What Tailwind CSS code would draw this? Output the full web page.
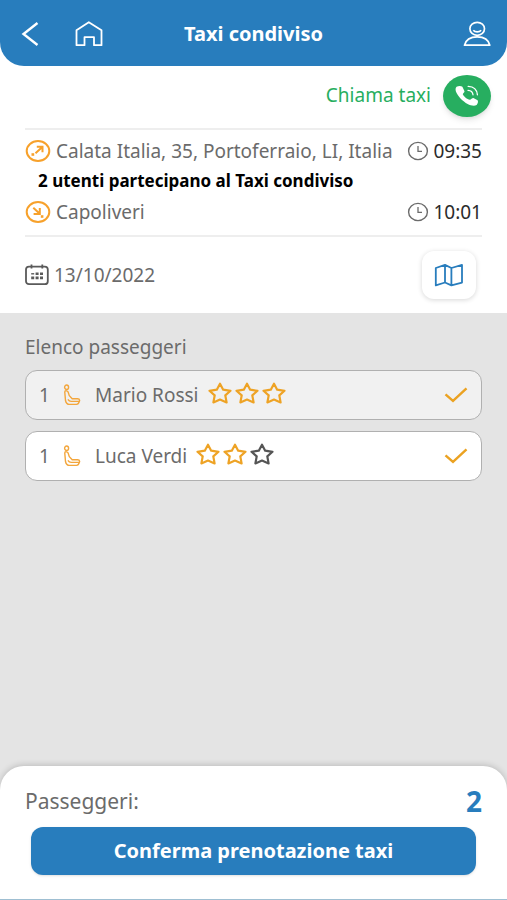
<!DOCTYPE html>
<html lang="it">
<head>
<meta charset="utf-8">
<meta name="viewport" content="width=device-width, initial-scale=1">
<title>Taxi condiviso</title>
<script src="https://cdn.jsdelivr.net/npm/@tailwindcss/browser@4"></script>
</head>
<body class="flex min-h-screen flex-col bg-white font-['Noto_Sans','Open_Sans',sans-serif] text-[19px] leading-6 text-[#6b6b6b]">
<svg class="hidden" aria-hidden="true">
  <symbol id="star" viewBox="0 0 24 22"><path d="M12 1.7 15.2 7.7 22.5 8.8 17.3 13.4 18.6 20.4 12 17.6 5.4 20.4 6.7 13.4 1.5 8.8 8.8 7.7Z" fill="none" stroke="currentColor" stroke-width="2.2" stroke-linejoin="round"/></symbol>
  <symbol id="clock" viewBox="0 0 22 20"><g fill="none" stroke="currentColor"><ellipse cx="11" cy="10" rx="9.4" ry="8.6" stroke-width="1.4"/><path d="M11 5V10.3H15" stroke-width="1.3"/></g></symbol>
  <symbol id="seat" viewBox="0 0 18 22"><g fill="none" stroke="currentColor" stroke-width="1.4" stroke-linejoin="round"><ellipse cx="3.6" cy="3.2" rx="2" ry="2.2"/><path d="M1.7 7.3C2.8 6.4 4.6 6.8 5.1 8L6.3 11.6 9.2 14.8H14.6C17.2 14.8 17.2 17.6 15.2 17.6"/><path d="M1.7 7.3 2.5 16.5C3 19 4.3 20.4 6.5 20.4H13.5C15 20.4 15.8 19.4 16.3 17.4H8.2C6.6 17.4 5.6 16.6 4.9 15.4"/></g></symbol>
  <symbol id="check" viewBox="0 0 24 18"><path d="M1.5 8.4 9 15 22.5 2.4" fill="none" stroke="currentColor" stroke-width="2.4"/></symbol>
</svg>

<header class="grid h-[66px] grid-cols-[1fr_auto_1fr] items-center rounded-b-3xl bg-[#287dbd] px-4 pt-0.5 text-white">
  <div class="flex items-center gap-[27px]">
    <button type="button" aria-label="Indietro" class="px-1">
      <svg class="h-7 w-6" viewBox="0 0 24 28"><path d="M17.5 3 3.5 14 17.5 25" fill="none" stroke="currentColor" stroke-width="2.4"/></svg>
    </button>
    <a href="#" aria-label="Home">
      <svg class="h-7 w-7" viewBox="0 0 28 28"><path d="M1.5 25.2V10.2L13.8 2.2 26.5 10.2V25.2H19V17.2H9.5V25.2Z" fill="none" stroke="currentColor" stroke-width="1.8" stroke-linejoin="round"/></svg>
    </a>
  </div>
  <h1 class="text-xl leading-6 font-bold">Taxi condiviso</h1>
  <a href="#" aria-label="Profilo" class="justify-self-end">
    <svg class="h-7 w-7" viewBox="0 0 28 28" fill="none" stroke="currentColor" stroke-width="1.7"><ellipse cx="14.2" cy="8.8" rx="7.3" ry="6.5"/><path d="M10.3 10.2C12 12.4 16.4 12.4 18.1 10.2"/><path d="M1.5 25.2C2.8 19.8 7.5 16.8 14.2 16.8S25.6 19.8 26.8 25.2Z" stroke-linejoin="round"/></svg>
  </a>
</header>

<main class="flex flex-1 flex-col">
  <section class="px-[25px]">
    <div class="-mr-[9px] flex h-[62px] items-center justify-end gap-3 pb-0.5">
      <label for="call" class="pb-0.5 text-[#27ae60]">Chiama taxi</label>
      <button id="call" type="button" class="flex h-[42px] w-12 items-center justify-center rounded-[50%] bg-[#27ae60] text-white shadow-md">
        <svg class="h-6 w-6" viewBox="0 0 24 24"><path d="M1.6 2.8C3.2 1.7 6.2 1.6 7.4 2.8L9.5 7.2C9.8 8.3 7.9 9.4 7.8 10.2C8.6 12.4 12.2 15.2 14.8 15.8C16 15.7 17.2 14 18.4 14.1L22.6 16.2C23.4 17 22.9 19.6 21.6 21C19.2 22.4 15.4 21.4 12.6 20C7.8 17.4 3 12.6 1 7.8C.4 6 .3 3.8 1.6 2.8Z" fill="currentColor"/><path d="M13 6.3C15.9 6.4 17.7 8 18 10.8M13.2 2.4C18.6 2.6 21.9 5.6 22.4 10.8" fill="none" stroke="currentColor" stroke-width="1.3" stroke-linecap="round"/></svg>
      </button>
    </div>
    <div class="border-y-2 border-[#eeeeee] pt-[9px] pb-[11px]">
      <div class="flex items-center justify-between">
        <div class="flex items-center gap-[5px]">
          <svg class="h-6 w-[26px] shrink-0 text-[#f7a12b]" viewBox="0 0 26 24" fill="none" stroke="currentColor"><ellipse cx="13" cy="12" rx="11.3" ry="10" stroke-width="2"/><path d="M10.5 14.2 17 8.3M11.8 7.8H17.5V13.2" stroke-width="2"/><path d="M6.5 15.5H9.2" stroke-width="2.6"/></svg>
          <span>Calata Italia, 35, Portoferraio, LI, Italia</span>
        </div>
        <div class="flex shrink-0 items-center gap-1">
          <svg class="h-5 w-[22px]"><use href="#clock"/></svg>
          <time class="text-[#2b2b2b]">09:35</time>
        </div>
      </div>
      <p class="pt-2 pb-[9px] pl-[13px] text-[17px] leading-5 font-bold text-black">2 utenti partecipano al Taxi condiviso</p>
      <div class="flex items-center justify-between">
        <div class="flex items-center gap-[5px]">
          <svg class="h-6 w-[26px] shrink-0 text-[#f7a12b]" viewBox="0 0 26 24" fill="none" stroke="currentColor"><ellipse cx="13" cy="12" rx="11.3" ry="10" stroke-width="2"/><path d="M8.3 7.8 14.2 13.2M14.8 8V14H8.6" stroke-width="2"/><path d="M15.8 16.5H18.4" stroke-width="2.6"/></svg>
          <span>Capoliveri</span>
        </div>
        <div class="flex shrink-0 items-center gap-1">
          <svg class="h-5 w-[22px]"><use href="#clock"/></svg>
          <time class="text-[#2b2b2b]">10:01</time>
        </div>
      </div>
    </div>
    <div class="flex h-[76px] items-center justify-between pr-1.5">
      <div class="flex items-center gap-[5px]">
        <svg class="h-6 w-6" viewBox="0 0 24 24" fill="none" stroke="#5a5a5a"><rect x="1" y="3.6" width="21.8" height="17.6" rx="3" stroke-width="1.8"/><path d="M6.5 1.5V5.5M17.3 1.5V5.5" stroke-width="1.8"/><path d="M10.6 10.8H18.2" stroke-width="2.4" stroke-dasharray="3 1.4"/><path d="M6.2 10.8H9.2" stroke-width="1.4"/><path d="M6.2 14.8H18.2" stroke-width="2.8" stroke-dasharray="3 1.4"/></svg>
        <time>13/10/2022</time>
      </div>
      <button type="button" aria-label="Mappa" class="flex h-12 w-[54px] items-center justify-center rounded-xl bg-white text-[#287dbd] shadow-[0_1px_5px_rgba(0,0,0,0.16)]">
        <svg class="h-6 w-[30px]" viewBox="0 0 30 24" fill="none" stroke="currentColor" stroke-width="1.8" stroke-linejoin="round"><path d="M1.8 5 11 1.9 17.4 5 28 1.9V19.6L17.4 22.4 11 19.5 1.8 22.4ZM11 1.9V19.5M17.4 5V22.4"/></svg>
      </button>
    </div>
  </section>

  <section class="flex-1 bg-[#e4e4e4] px-[25px] pt-[22px]">
    <h2>Elenco passeggeri</h2>
    <ul class="mt-[11px] flex flex-col gap-[11px]">
      <li class="flex h-[50px] items-center rounded-xl border border-[#b0b0b0] bg-[#f1f1f1] px-[13px]">
        <span class="w-6">1</span>
        <svg class="h-[22px] w-[18px] text-[#f3a63c]"><use href="#seat"/></svg>
        <span class="ml-[14px]">Mario Rossi</span>
        <div class="ml-[9px] flex gap-[3px] pb-1 text-[#eea325]" role="img" aria-label="3 stelle su 3">
          <svg class="h-[22px] w-6"><use href="#star"/></svg>
          <svg class="h-[22px] w-6"><use href="#star"/></svg>
          <svg class="h-[22px] w-6"><use href="#star"/></svg>
        </div>
        <svg class="ml-auto h-[18px] w-6 text-[#eba221]"><use href="#check"/></svg>
      </li>
      <li class="flex h-[50px] items-center rounded-xl border border-[#b0b0b0] bg-white px-[13px]">
        <span class="w-6">1</span>
        <svg class="h-[22px] w-[18px] text-[#f3a63c]"><use href="#seat"/></svg>
        <span class="ml-[14px]">Luca Verdi</span>
        <div class="ml-[9px] flex gap-[3px] pb-1 text-[#eea325]" role="img" aria-label="2 stelle su 3">
          <svg class="h-[22px] w-6"><use href="#star"/></svg>
          <svg class="h-[22px] w-6"><use href="#star"/></svg>
          <svg class="h-[22px] w-6 text-[#555555]"><use href="#star"/></svg>
        </div>
        <svg class="ml-auto h-[18px] w-6 text-[#eba221]"><use href="#check"/></svg>
      </li>
    </ul>
  </section>
</main>

<footer class="bg-[#e4e4e4]">
  <div class="rounded-t-3xl border-b border-[#9fbfd2] bg-white px-[25px] pt-[19px] pb-6 shadow-[0_-1px_6px_rgba(0,0,0,0.18)]">
    <div class="flex h-8 items-center justify-between text-[21px]">
      <span>Passeggeri:</span>
      <strong class="text-[28px] font-bold text-[#287dbd]">2</strong>
    </div>
    <div class="px-1.5 pt-[10px]">
      <button type="button" class="h-12 w-full rounded-xl bg-[#287dbd] text-xl font-bold text-white shadow-sm">Conferma prenotazione taxi</button>
    </div>
  </div>
</footer>
</body>
</html>
